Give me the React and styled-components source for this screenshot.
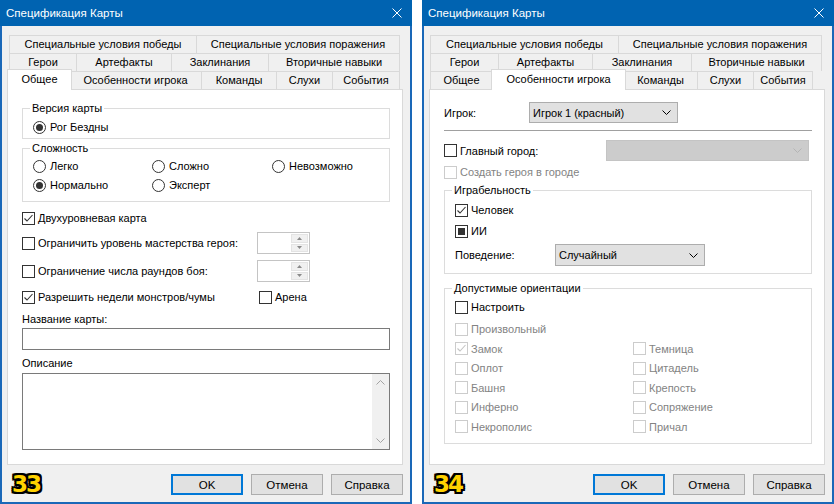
import React from 'react';
import styled, { createGlobalStyle } from 'styled-components';

const Global = createGlobalStyle`
  html, body { margin: 0; padding: 0; background: #fff; }
  body { font-family: "Liberation Sans", Arial, sans-serif; font-size: 11px; color: #000; }
  * { box-sizing: border-box; }
`;

const Screen = styled.div`
  display: flex;
  gap: 10px;
  width: 834px;
  height: 504px;
  background: #fff;
  overflow: hidden;
`;

const Window = styled.div`
  width: 412px;
  height: 504px;
  display: flex;
  flex-direction: column;
  background: #f0f0f0;
  border: 2px solid #1a68b8;
  border-top: none;
`;

const TitleBar = styled.div`
  height: 26px;
  margin: 0 -2px;
  padding: 0 10px 0 6px;
  background: #0063b1;
  color: #fff;
  display: flex;
  align-items: center;
  justify-content: space-between;
  font-size: 11.5px;
  flex: none;
`;

const Body = styled.div`
  flex: 1;
  display: flex;
  flex-direction: column;
  padding: 9px 7px 0 5px;
`;

const TabStrip = styled.div`
  display: flex;
  flex-direction: column;
  margin-left: ${p => p.$offset}px;
`;

const TabRow = styled.div`
  display: flex;
  height: 18px;
`;

const Tab = styled.div`
  position: relative;
  flex: none;
  width: ${p => (p.$active ? p.$w + 4 : p.$w)}px;
  height: ${p => (p.$active ? 21 : 18)}px;
  margin: ${p => (p.$active ? '-2px -2px 0' : '0')};
  z-index: ${p => (p.$active ? 2 : 0)};
  background: ${p => (p.$active ? '#fff' : '#f0f0f0')};
  border: 1px solid #d9d9d9;
  border-bottom: none;
  border-left-width: ${p => (p.$first || p.$active ? 1 : 0)}px;
  text-align: center;
  line-height: ${p => (p.$active ? 18 : 17)}px;
  white-space: nowrap;
`;

const Panel = styled.div`
  width: 396px;
  height: 376px;
  background: #fff;
  border: 1px solid #d9d9d9;
  padding: ${p => p.$pt}px 12px 0 14px;
  display: flex;
  flex-direction: column;
`;

const Footer = styled.div`
  width: 396px;
  flex: 1;
  display: flex;
  align-items: flex-start;
  padding-top: 9px;
`;

const Badge = styled.div`
  margin: -2px 0 0 5px;
  font-family: "DejaVu Sans", sans-serif;
  font-weight: bold;
  font-size: 23px;
  line-height: 24px;
  letter-spacing: -2px;
  color: #ffd200;
  text-shadow: -2px -2px 0 #000, 2px -2px 0 #000, -2px 2px 0 #000, 2px 2px 0 #000,
    0 -2px 0 #000, 0 2px 0 #000, -2px 0 0 #000, 2px 0 0 #000;
`;

const Buttons = styled.div`
  margin-left: auto;
  display: flex;
  gap: 8px;
`;

const Button = styled.div`
  width: 72px;
  height: 21px;
  background: #e1e1e1;
  border: ${p => (p.$default ? '2px solid #0078d7' : '1px solid #adadad')};
  display: flex;
  align-items: center;
  justify-content: center;
  font-size: 11.5px;
`;

const Group = styled.fieldset`
  margin: ${p => p.$mt}px 0 0;
  padding: 0 10px ${p => p.$pb}px;
  border: 1px solid #dcdcdc;
  min-width: 0;
`;

const Legend = styled.legend`
  margin-left: -3px;
  padding: 0 2px;
  line-height: 14px;
`;

const Option = styled.label`
  display: flex;
  align-items: center;
  gap: ${p => (p.$radio ? 4 : 3)}px;
  height: ${p => p.$h || 18}px;
  margin-top: ${p => p.$mt || 0}px;
  margin-left: ${p => p.$ml || 0}px;
  color: ${p => (p.$disabled ? '#838383' : '#000')};
  white-space: nowrap;
`;

const Box = styled.span`
  width: 13px;
  height: 13px;
  flex: none;
  background: #fff;
  border: 1px solid ${p => (p.$disabled ? '#cccccc' : '#333333')};
  display: flex;
  align-items: center;
  justify-content: center;
`;

const MixedMark = styled.span`
  width: 7px;
  height: 7px;
  background: #333;
`;

const RadioCircle = styled.span`
  width: 13px;
  height: 13px;
  flex: none;
  border-radius: 50%;
  border: 1px solid #333;
  background: #fff;
  display: flex;
  align-items: center;
  justify-content: center;
`;

const RadioDot = styled.span`
  width: 7px;
  height: 7px;
  border-radius: 50%;
  background: #333;
`;

const RadioGrid = styled.div`
  display: grid;
  grid-template-columns: 119px 120px 1fr;
  grid-auto-rows: 19px;
  margin-top: 2px;
`;

const OptionsGrid = styled.div`
  display: grid;
  grid-template-columns: 235px 1fr;
  grid-template-rows: 18px 22px 22px 18px;
  row-gap: 5px;
  margin-top: 7px;
  & > :nth-child(1) { grid-column: 1 / 3; }
  & > :nth-child(4), & > :nth-child(5) { margin-top: 1px; }
  & > :nth-child(6), & > :nth-child(7) { margin-top: 2px; }
`;

const Spin = styled.div`
  width: 53px;
  height: 22px;
  border: 1px solid #c4c4c4;
  background: #fff;
  display: flex;
  justify-content: flex-end;
  padding: 1px;
`;

const SpinButtons = styled.div`
  width: 17px;
  display: flex;
  flex-direction: column;
  gap: 1px;
`;

const SpinButton = styled.div`
  flex: 1;
  background: #f0f0f0;
  border: 1px solid #e3e3e3;
  display: flex;
  align-items: center;
  justify-content: center;
`;

const FieldLabel = styled.div`
  line-height: 14px;
  margin-top: ${p => p.$mt}px;
`;

const TextBox = styled.div`
  width: 368px;
  height: ${p => p.$h}px;
  margin-top: ${p => p.$mt}px;
  border: 1px solid #7a7a7a;
  background: #fff;
  display: flex;
  justify-content: flex-end;
`;

const ScrollBar = styled.div`
  width: 17px;
  background: #f0f0f0;
  display: flex;
  flex-direction: column;
  justify-content: space-between;
`;

const ScrollArrow = styled.div`
  height: 17px;
  display: flex;
  align-items: center;
  justify-content: center;
`;

const FormRow = styled.div`
  display: grid;
  grid-template-columns: ${p => p.$cols};
  align-items: center;
  height: ${p => p.$h}px;
  margin-top: ${p => p.$mt || 0}px;
`;

const Separator = styled.div`
  height: 1px;
  background: #a0a0a0;
  margin-top: 7px;
`;

const Combo = styled.div`
  width: ${p => p.$w}px;
  height: ${p => p.$h || 21}px;
  background: ${p => (p.$disabled ? '#cccccc' : '#e1e1e1')};
  border: 1px solid ${p => (p.$disabled ? '#c4c4c4' : '#adadad')};
  display: flex;
  align-items: center;
  justify-content: space-between;
  padding: 0 6px 0 3px;
  white-space: nowrap;
`;

const TownGrid = styled.div`
  display: grid;
  grid-template-columns: 178px 1fr;
  grid-auto-rows: 19.5px;
  margin-top: 1px;
`;

const CloseIcon = () => (
  <svg width="10" height="10" viewBox="0 0 10 10">
    <path d="M0.5 0.5 L9.5 9.5 M9.5 0.5 L0.5 9.5" stroke="#fff" strokeWidth="1" fill="none" />
  </svg>
);

const Chevron = ({ color = '#000' }) => (
  <svg width="9" height="5" viewBox="0 0 9 5">
    <polyline points="0.5,0.5 4.5,4.5 8.5,0.5" fill="none" stroke={color} strokeWidth="1" />
  </svg>
);

const Check = ({ checked, mixed, disabled }) => (
  <Box $disabled={disabled}>
    {checked && (
      <svg width="11" height="11" viewBox="0 0 11 11">
        <polyline points="1.5,5.5 4,8 9.5,2" fill="none" stroke={disabled ? '#c4c4c4' : '#333'} strokeWidth="1.1" />
      </svg>
    )}
    {mixed && <MixedMark />}
  </Box>
);

const CheckOption = ({ label, checked, mixed, disabled, h, mt, ml }) => (
  <Option $disabled={disabled} $h={h} $mt={mt} $ml={ml}>
    <Check checked={checked} mixed={mixed} disabled={disabled} />
    {label}
  </Option>
);

const RadioOption = ({ label, checked }) => (
  <Option $radio>
    <RadioCircle>{checked && <RadioDot />}</RadioCircle>
    {label}
  </Option>
);

const SpinBox = () => (
  <Spin>
    <SpinButtons>
      <SpinButton>
        <svg width="5" height="3" viewBox="0 0 5 3"><polygon points="0,3 2.5,0 5,3" fill="#8a8a8a" /></svg>
      </SpinButton>
      <SpinButton>
        <svg width="5" height="3" viewBox="0 0 5 3"><polygon points="0,0 2.5,3 5,0" fill="#8a8a8a" /></svg>
      </SpinButton>
    </SpinButtons>
  </Spin>
);

const Tabs = ({ rows, offset }) => (
  <TabStrip $offset={offset}>
    {rows.map((row, ri) => (
      <TabRow key={ri}>
        {row.map((t, ti) => (
          <Tab key={t.label} $w={t.w} $active={t.active} $first={ti === 0}>
            {t.label}
          </Tab>
        ))}
      </TabRow>
    ))}
  </TabStrip>
);

const Dialog = ({ tabs, tabOffset, badge, panelTop, children }) => (
  <Window>
    <TitleBar>
      <span>Спецификация Карты</span>
      <CloseIcon />
    </TitleBar>
    <Body>
      <Tabs rows={tabs} offset={tabOffset} />
      <Panel $pt={panelTop}>{children}</Panel>
      <Footer>
        <Badge>{badge}</Badge>
        <Buttons>
          <Button $default>OK</Button>
          <Button>Отмена</Button>
          <Button>Справка</Button>
        </Buttons>
      </Footer>
    </Body>
  </Window>
);

const tabs1 = [
  [
    { label: 'Специальные условия победы', w: 188 },
    { label: 'Специальные условия поражения', w: 203 },
  ],
  [
    { label: 'Герои', w: 68 },
    { label: 'Артефакты', w: 95 },
    { label: 'Заклинания', w: 97 },
    { label: 'Вторичные навыки', w: 131 },
  ],
  [
    { label: 'Общее', w: 61, active: true },
    { label: 'Особенности игрока', w: 132 },
    { label: 'Команды', w: 75 },
    { label: 'Слухи', w: 56 },
    { label: 'События', w: 67 },
  ],
];

const tabs2 = [
  [
    { label: 'Специальные условия победы', w: 189 },
    { label: 'Специальные условия поражения', w: 203 },
  ],
  [
    { label: 'Герои', w: 69 },
    { label: 'Артефакты', w: 94 },
    { label: 'Заклинания', w: 99 },
    { label: 'Вторичные навыки', w: 130 },
  ],
  [
    { label: 'Общее', w: 63 },
    { label: 'Особенности игрока', w: 131, active: true },
    { label: 'Команды', w: 74 },
    { label: 'Слухи', w: 56 },
    { label: 'События', w: 59 },
  ],
];

const towns = [
  ['Замок', true], ['Темница', false],
  ['Оплот', false], ['Цитадель', false],
  ['Башня', false], ['Крепость', false],
  ['Инферно', false], ['Сопряжение', false],
  ['Некрополис', false], ['Причал', false],
];

export default function App() {
  return (
    <Screen>
      <Global />
      <Dialog tabs={tabs1} tabOffset={2} badge="33" panelTop={11}>
        <Group $mt={0} $pb={2}>
          <Legend>Версия карты</Legend>
          <Option $radio $mt={3}>
            <RadioCircle><RadioDot /></RadioCircle>
            Рог Бездны
          </Option>
        </Group>
        <Group $mt={2} $pb={6}>
          <Legend>Сложность</Legend>
          <RadioGrid>
            <RadioOption label="Легко" />
            <RadioOption label="Сложно" />
            <RadioOption label="Невозможно" />
            <RadioOption label="Нормально" checked />
            <RadioOption label="Эксперт" />
          </RadioGrid>
        </Group>
        <OptionsGrid>
          <CheckOption label="Двухуровневая карта" checked />
          <CheckOption label="Ограничить уровень мастерства героя:" h={22} />
          <SpinBox />
          <CheckOption label="Ограничение числа раундов боя:" h={22} />
          <SpinBox />
          <CheckOption label="Разрешить недели монстров/чумы" checked />
          <CheckOption label="Арена" ml={2} />
        </OptionsGrid>
        <FieldLabel $mt={8}>Название карты:</FieldLabel>
        <TextBox $h={22} $mt={2} />
        <FieldLabel $mt={6}>Описание</FieldLabel>
        <TextBox $h={77} $mt={3}>
          <ScrollBar>
            <ScrollArrow>
              <svg width="9" height="5" viewBox="0 0 9 5"><polyline points="0.5,4.5 4.5,0.5 8.5,4.5" fill="none" stroke="#a3a3a3" /></svg>
            </ScrollArrow>
            <ScrollArrow>
              <svg width="9" height="5" viewBox="0 0 9 5"><polyline points="0.5,0.5 4.5,4.5 8.5,0.5" fill="none" stroke="#a3a3a3" /></svg>
            </ScrollArrow>
          </ScrollBar>
        </TextBox>
      </Dialog>

      <Dialog tabs={tabs2} tabOffset={1} badge="34" panelTop={12}>
        <FormRow $cols="85px 149px" $h={21}>
          <span>Игрок:</span>
          <Combo $w={149}>
            <span>Игрок 1 (красный)</span>
            <Chevron />
          </Combo>
        </FormRow>
        <Separator />
        <FormRow $cols="162px 203px" $h={21} $mt={9}>
          <CheckOption label="Главный город:" />
          <Combo $w={203} $disabled>
            <span />
            <Chevron color="#b4b4b4" />
          </Combo>
        </FormRow>
        <CheckOption label="Создать героя в городе" disabled mt={2} />
        <Group $mt={2} $pb={7}>
          <Legend>Играбельность</Legend>
          <CheckOption label="Человек" checked mt={4} />
          <CheckOption label="ИИ" mixed mt={3} />
          <FormRow $cols="100px 150px" $h={22} $mt={4}>
            <span>Поведение:</span>
            <Combo $w={150} $h={22}>
              <span>Случайный</span>
              <Chevron />
            </Combo>
          </FormRow>
        </Group>
        <Group $mt={7} $pb={6}>
          <Legend>Допустимые ориентации</Legend>
          <CheckOption label="Настроить" mt={3} />
          <CheckOption label="Произвольный" disabled mt={4} />
          <TownGrid>
            {towns.map(([name, on]) => (
              <CheckOption key={name} label={name} checked={on} disabled h={19.5} />
            ))}
          </TownGrid>
        </Group>
      </Dialog>
    </Screen>
  );
}
